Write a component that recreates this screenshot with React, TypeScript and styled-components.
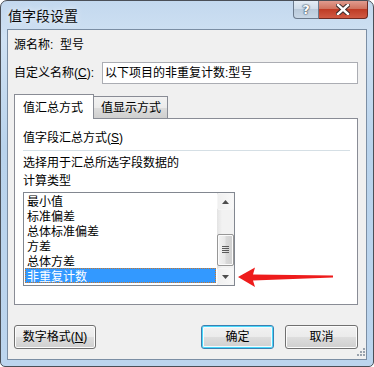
import React from 'react';
import styled, { createGlobalStyle, css } from 'styled-components';

const GlobalStyle = createGlobalStyle`
  html, body { margin: 0; padding: 0; background: #ffffff; }
  body { font-family: "Liberation Sans", "Noto Sans CJK SC", sans-serif; font-size: 12px; color: #000; }
  * { box-sizing: border-box; }
`;

const Window = styled.div`
  position: relative;
  width: 374px;
  height: 367px;
  display: flex;
  flex-direction: column;
  padding: 0 6px 6px 6px;
  border: 1px solid #4a4f57;
  border-radius: 7px 7px 5px 5px;
  background: linear-gradient(180deg, #c3d8ee 0%, #cfe1f3 10%, #b9d3ec 40%, #bcd5ee 100%);
  overflow: hidden;
`;

const TitleBar = styled.div`
  height: 28px;
  display: flex;
  align-items: flex-start;
  justify-content: space-between;
`;

const Title = styled.div`
  padding: 7px 0 0 1px;
  font-size: 14px;
  line-height: 17px;
  color: #0b0b0b;
  text-shadow: 0 0 6px rgba(255,255,255,0.9);
`;

const CaptionButtons = styled.div`
  display: flex;
  margin-right: -1px;
  margin-top: -1px;
`;

const CaptionButton = styled.div<{ $close?: boolean }>`
  height: 19px;
  width: 26px;
  display: flex;
  align-items: center;
  justify-content: center;
  border: 1px solid #6b7a8c;
  border-top: none;
  border-radius: 0 0 0 4px;
  background: linear-gradient(180deg, #e6eef6 0%, #cfdce9 50%, #b9c9da 51%, #c8d7e6 100%);
  font-family: "DejaVu Sans", sans-serif;
  font-weight: bold;
  font-size: 13px;
  color: #fff;
  text-shadow: 0 0 1px #3c4b5c, 0 0 1px #3c4b5c, 0 0 2px #3c4b5c;
  ${p => p.$close && css`
    width: 49px;
    border-left: none;
    border-radius: 0 0 4px 0;
    border-color: #6e2a22;
    background: linear-gradient(180deg, #e3a195 0%, #d0735f 48%, #bf3b25 52%, #d05a44 100%);
  `}
`;

const Client = styled.div`
  flex: 1;
  display: flex;
  flex-direction: column;
  border: 1px solid #7b8ea4;
  background: #f0f0f0;
  padding: 7px 8px 0 6px;
`;

const Row = styled.div<{ $gap?: number }>`
  display: flex;
  align-items: center;
  margin-top: ${p => p.$gap ?? 0}px;
  line-height: 17px;
`;

const Label = styled.span`
  width: 88px;
  flex: none;
`;

const TextInput = styled.div`
  width: 257px;
  height: 22px;
  border: 1px solid #abadb3;
  background: #fff;
  padding: 0 0 0 2px;
  line-height: 21px;
`;

const TabStrip = styled.div`
  display: flex;
  align-items: flex-end;
  height: 24px;
  margin-top: 10px;
`;

const Tab = styled.div<{ $active?: boolean; $w: number }>`
  width: ${p => p.$w}px;
  height: ${p => (p.$active ? 25 : 22)}px;
  border: 1px solid #898c95;
  border-bottom: none;
  padding: ${p => (p.$active ? '5px 0 0 8px' : '3px 0 0 7px')};
  line-height: 17px;
  margin-bottom: ${p => (p.$active ? -1 : 0)}px;
  position: relative;
  z-index: ${p => (p.$active ? 2 : 1)};
  background: ${p => (p.$active ? '#ffffff' : 'linear-gradient(180deg, #f2f2f2 0%, #ebebeb 50%, #dddddd 51%, #cfcfcf 100%)')};
  & + & { margin-left: -1px; }
`;

const Panel = styled.div`
  width: 344px;
  height: 187px;
  border: 1px solid #898c95;
  background: #fff;
  padding: 10px 0 0 8px;
  line-height: 18px;
  display: flex;
  flex-direction: column;
`;

const Accel = styled.span`
  text-decoration: underline;
`;

const Separator = styled.div`
  height: 1px;
  margin: 3px 7px 3px 0;
  background: #d5dfe5;
`;

const ListBox = styled.div`
  margin-top: 2px;
  width: 212px;
  height: 94px;
  border: 1px solid #828790;
  background: #fff;
  display: flex;
`;

const Items = styled.div`
  flex: 1;
  padding: 0 1px 0 1px;
  display: flex;
  flex-direction: column;
  overflow: hidden;
`;

const Item = styled.div<{ $selected?: boolean }>`
  height: 15px;
  flex: none;
  line-height: 18px;
  padding-left: 2px;
  white-space: nowrap;
  ${p => p.$selected && css`
    background: #3399ff;
    color: #fff;
    outline: 1px dotted #c8762a;
    outline-offset: -1px;
  `}
`;

const ScrollBar = styled.div`
  width: 17px;
  display: flex;
  flex-direction: column;
  background: linear-gradient(90deg, #e3e3e3 0%, #f2f2f2 30%, #f2f2f2 100%);
`;

const ScrollArrow = styled.div`
  height: 17px;
  display: flex;
  align-items: center;
  justify-content: center;
  border: 1px solid #f6f6f6;
  border-radius: 2px;
  background: linear-gradient(90deg, #f0f0f0, #f8f8f8);
`;

const Track = styled.div`
  flex: 1;
  display: flex;
  flex-direction: column;
  justify-content: flex-end;
  padding-bottom: 2px;
`;

const Thumb = styled.div`
  height: 32px;
  border: 1px solid #979797;
  border-radius: 2px;
  background: linear-gradient(90deg, #f3f3f3 0%, #e8e8e8 45%, #d9d9d9 55%, #cfcfcf 100%);
  box-shadow: inset 0 0 0 1px #fbfbfb;
  display: flex;
  align-items: center;
  justify-content: center;
`;

const ButtonRow = styled.div`
  display: flex;
  margin-top: 20px;
`;

const Button = styled.div<{ $default?: boolean; $w?: number; $ml?: number }>`
  width: ${p => p.$w ?? 73}px;
  height: 24px;
  margin-left: ${p => p.$ml ?? 0}px;
  border: 1px solid #707070;
  border-radius: 3px;
  background: linear-gradient(180deg, #f2f2f2 0%, #ebebeb 48%, #dddddd 52%, #cfcfcf 100%);
  box-shadow: inset 0 0 0 1px #fcfcfc;
  display: flex;
  align-items: center;
  justify-content: center;
  line-height: 18px;
  ${p => p.$default && css`
    border-color: #3c7fb1;
    box-shadow: inset 0 0 0 1px #48d8fb, inset 0 0 0 2px #f4fbfe;
  `}
`;

const Grip = styled.svg`
  position: absolute;
  right: 8px;
  bottom: 8px;
`;

const Annotation = styled.svg`
  position: absolute;
  left: 236px;
  top: 265px;
`;

const items = ['最小值', '标准偏差', '总体标准偏差', '方差', '总体方差', '非重复计数'];

export default function App() {
  return (
    <>
      <GlobalStyle />
      <Window>
        <TitleBar>
          <Title>值字段设置</Title>
          <CaptionButtons>
            <CaptionButton>?</CaptionButton>
            <CaptionButton $close>
              <svg width="14" height="11" viewBox="0 0 14 11">
                <path d="M2 1 L12 10 M12 1 L2 10" stroke="#3a2a2a" strokeWidth="4.4" strokeLinecap="square" />
                <path d="M2 1 L12 10 M12 1 L2 10" stroke="#ffffff" strokeWidth="2.4" strokeLinecap="square" />
              </svg>
            </CaptionButton>
          </CaptionButtons>
        </TitleBar>
        <Client>
          <Row>源名称:&nbsp;&nbsp;型号</Row>
          <Row $gap={8}>
            <Label>自定义名称(<Accel>C</Accel>):</Label>
            <TextInput>以下项目的非重复计数:型号</TextInput>
          </Row>
          <TabStrip>
            <Tab $active $w={80}>值汇总方式</Tab>
            <Tab $w={75}>值显示方式</Tab>
          </TabStrip>
          <Panel>
            <div>值字段汇总方式(<Accel>S</Accel>)</div>
            <Separator />
            <div>选择用于汇总所选字段数据的</div>
            <div>计算类型</div>
            <ListBox>
              <Items>
                {items.map((t, i) => (
                  <Item key={t} $selected={i === items.length - 1}>{t}</Item>
                ))}
              </Items>
              <ScrollBar>
                <ScrollArrow>
                  <svg width="7" height="4" viewBox="0 0 7 4"><path d="M0 4 L3.5 0 L7 4 Z" fill="#4d4d4d" /></svg>
                </ScrollArrow>
                <Track>
                  <Thumb>
                    <svg width="7" height="8" viewBox="0 0 7 8">
                      <path d="M0 0.5 H7 M0 2.5 H7 M0 4.5 H7 M0 6.5 H7" stroke="#5a5a5a" strokeWidth="1" />
                    </svg>
                  </Thumb>
                </Track>
                <ScrollArrow>
                  <svg width="7" height="4" viewBox="0 0 7 4"><path d="M0 0 L3.5 4 L7 0 Z" fill="#4d4d4d" /></svg>
                </ScrollArrow>
              </ScrollBar>
            </ListBox>
          </Panel>
          <ButtonRow>
            <Button $w={82}>数字格式(<Accel>N</Accel>)</Button>
            <Button $default $ml={105}>确定</Button>
            <Button $ml={11}>取消</Button>
          </ButtonRow>
        </Client>
        <Grip width="10" height="10" viewBox="0 0 10 10">
          {[[8, 0], [8, 3], [5, 3], [8, 6], [5, 6], [2, 6]].map(([x, y]) => (
            <rect key={`${x}-${y}`} x={x} y={y} width="2" height="2" fill="#9aa3ad" />
          ))}
        </Grip>
        <Annotation width="98" height="22" viewBox="0 0 98 22">
          <path d="M1 11 L18 1.5 L16 8.5 L96 9.5 L96 11.5 L16 14.5 L18 21 Z" fill="#ee1c1c" />
        </Annotation>
      </Window>
    </>
  );
}
